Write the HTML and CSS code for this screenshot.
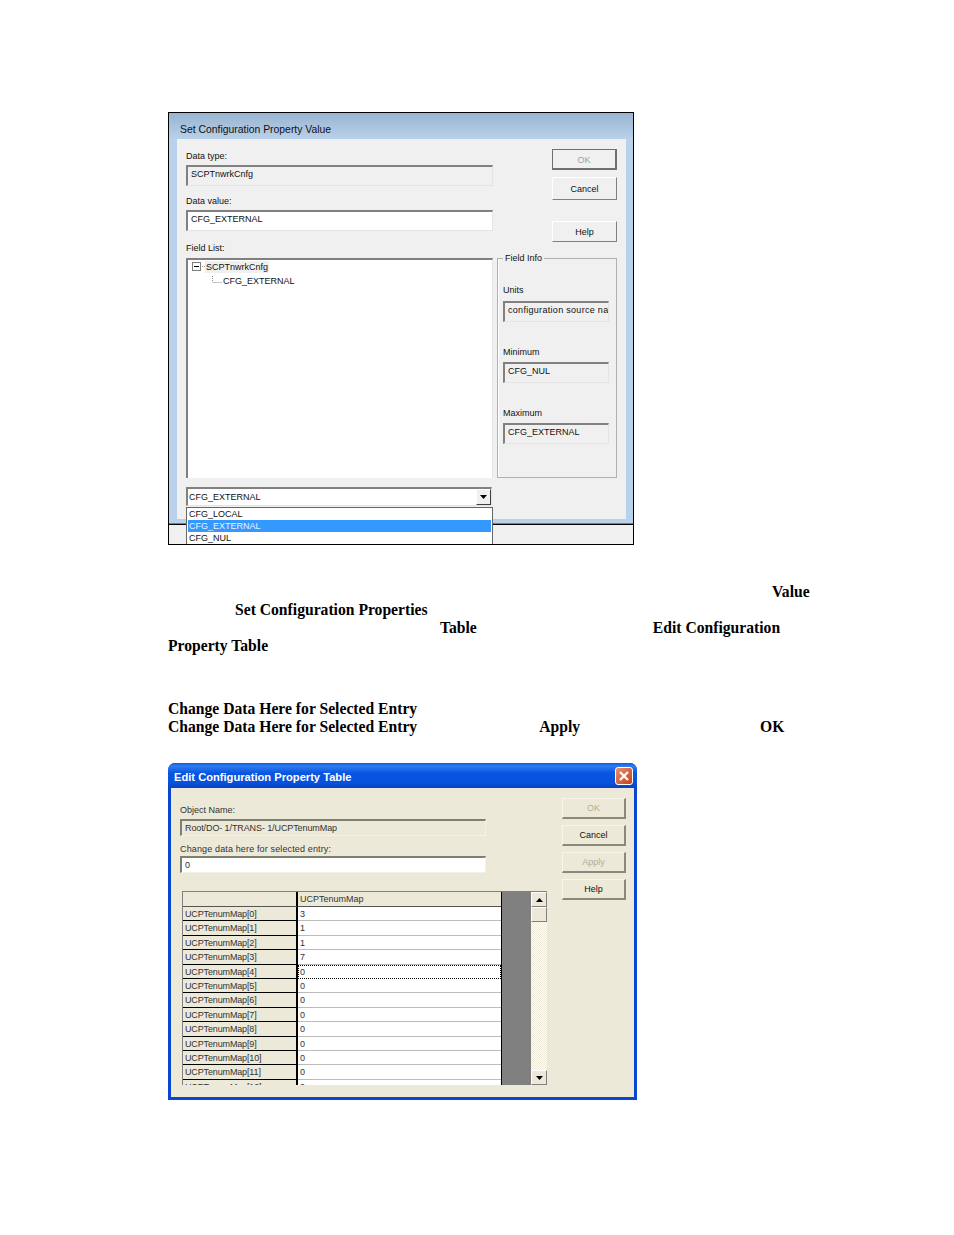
FILE: index.html
```html
<!DOCTYPE html>
<html lang="en">
<head>
<meta charset="utf-8">
<title>Configuration Properties</title>
<link rel="stylesheet" href="styles.css">
</head>
<body>
<section class="d1">
  <div class="d1-frame">
    <div class="d1-title">Set Configuration Property Value</div>
    <div class="d1-client">
      <div class="d1-left">
        <div class="lbl l-first">Data type:</div>
        <div class="field f-gray f-21">SCPTnwrkCnfg</div>
        <div class="lbl l-second">Data value:</div>
        <div class="field f-white f-21">CFG_EXTERNAL</div>
        <div class="lbl l-third">Field List:</div>
        <div class="tree">
          <div class="tree-root">
            <svg class="tree-icon" width="13" height="10" viewBox="0 0 13 10"><rect x="0.5" y="0.5" width="8" height="8" fill="#fff" stroke="#808080"/><path d="M2 4.500h5" stroke="#000"/><path d="M10 4.500h3" stroke="#999" stroke-dasharray="1 1"/></svg>
            <span class="tree-sel">SCPTnwrkCnfg</span>
          </div>
          <div class="tree-child">
            <svg class="tree-icon" width="10" height="10" viewBox="0 0 10 10"><path d="M0.500 0v6M0.500 6.500h9" stroke="#888" stroke-dasharray="1 1" fill="none"/></svg>
            <span>CFG_EXTERNAL</span>
          </div>
        </div>
        <div class="combo">
          <span>CFG_EXTERNAL</span>
          <span class="combo-btn"><svg width="7" height="4" viewBox="0 0 7 4"><path d="M0 0h7L3.500 4z" fill="#000"/></svg></span>
        </div>
      </div>
      <div class="d1-right">
        <div class="btn b-65 b-dis b-focus">OK</div>
        <div class="btn b-65 b-cancel">Cancel</div>
        <div class="btn b-65 b-help">Help</div>
        <div class="group">
          <span class="legend">Field Info</span>
          <div class="lbl g-first">Units</div>
          <div class="field f-gray f-g f-wide">configuration source name</div>
          <div class="lbl g-next">Minimum</div>
          <div class="field f-gray f-g">CFG_NUL</div>
          <div class="lbl g-next">Maximum</div>
          <div class="field f-gray f-g">CFG_EXTERNAL</div>
        </div>
      </div>
    </div>
  </div>
  <div class="d1-foot"></div>
  <ul class="drop">
    <li>CFG_LOCAL</li>
    <li class="drop-sel">CFG_EXTERNAL</li>
    <li>CFG_NUL</li>
  </ul>
</section>

<div class="doc">
  <p class="line"><b class="m-value">Value</b></p>
  <p class="line"><b class="m-set">Set Configuration Properties</b></p>
  <p class="line"><b class="m-table">Table</b><b class="m-edit">Edit Configuration</b></p>
  <p class="line"><b>Property Table</b></p>
  <p class="line l-gap"><b>Change Data Here for Selected Entry</b></p>
  <p class="line"><b>Change Data Here for Selected Entry</b><b class="m-apply">Apply</b><b class="m-ok">OK</b></p>
</div>

<section class="d2">
  <div class="d2-title">
    <span>Edit Configuration Property Table</span>
    <span class="close"><svg width="12" height="12" viewBox="0 0 12 12"><path d="M2 2l8 8M10 2l-8 8" stroke="#fff" stroke-width="2.200" fill="none"/></svg></span>
  </div>
  <div class="d2-client">
    <div class="d2-left">
      <div class="lbl2">Object Name:</div>
      <div class="field2 f2-gray">Root/DO- 1/TRANS- 1/UCPTenumMap</div>
      <div class="lbl2 l2-next">Change data here for selected entry:</div>
      <div class="field2 f2-white">0</div>
      <div class="grid-wrap">
        <div class="grid">
          <div class="row row-head"><div class="c1"></div><div class="c2">UCPTenumMap</div></div>
          <div class="row"><div class="c1">UCPTenumMap[0]</div><div class="c2">3</div></div>
          <div class="row"><div class="c1">UCPTenumMap[1]</div><div class="c2">1</div></div>
          <div class="row"><div class="c1">UCPTenumMap[2]</div><div class="c2">1</div></div>
          <div class="row"><div class="c1">UCPTenumMap[3]</div><div class="c2">7</div></div>
          <div class="row"><div class="c1">UCPTenumMap[4]</div><div class="c2 c-focus">0</div></div>
          <div class="row"><div class="c1">UCPTenumMap[5]</div><div class="c2">0</div></div>
          <div class="row"><div class="c1">UCPTenumMap[6]</div><div class="c2">0</div></div>
          <div class="row"><div class="c1">UCPTenumMap[7]</div><div class="c2">0</div></div>
          <div class="row"><div class="c1">UCPTenumMap[8]</div><div class="c2">0</div></div>
          <div class="row"><div class="c1">UCPTenumMap[9]</div><div class="c2">0</div></div>
          <div class="row"><div class="c1">UCPTenumMap[10]</div><div class="c2">0</div></div>
          <div class="row"><div class="c1">UCPTenumMap[11]</div><div class="c2">0</div></div>
          <div class="row"><div class="c1">UCPTenumMap[12]</div><div class="c2">0</div></div>
        </div>
        <div class="gray-fill"></div>
        <div class="scroll">
          <div class="sb-btn"><svg width="7" height="4" viewBox="0 0 7 4"><path d="M0 4h7L3.500 0z" fill="#000"/></svg></div>
          <div class="sb-thumb"></div>
          <div class="sb-track"></div>
          <div class="sb-btn"><svg width="7" height="4" viewBox="0 0 7 4"><path d="M0 0h7L3.500 4z" fill="#000"/></svg></div>
        </div>
      </div>
    </div>
    <div class="d2-right">
      <div class="btn2 b2-dis">OK</div>
      <div class="btn2">Cancel</div>
      <div class="btn2 b2-dis">Apply</div>
      <div class="btn2">Help</div>
    </div>
  </div>
</section>
</body>
</html>
```
FILE: styles.css
```css
* { box-sizing: border-box; }
html, body { margin: 0; padding: 0; background: #fff; }
body { height: 1235px; overflow: hidden; padding: 112px 0 0 168px; font-family: "Liberation Sans", Arial, sans-serif; font-size: 9px; color: #111; }

/* first dialog */
.d1 { position: relative; width: 466px; height: 433px; border: 1px solid #000; background: #f0f0f0; }
.d1-frame { height: 412px; background: #b9d1ea; border-bottom: 1px solid #000; box-shadow: inset 0 -1px 0 #1fa3b8; padding: 0 7px 6px 8px; }
.d1-title { height: 26px; margin: 0 -7px 0 -8px; padding: 10px 0 0 11px; font-size: 10.400px; line-height: 13px; background: linear-gradient(#99b4d1, #b9d1ea); }
.d1-client { display: flex; height: 380px; width: 449px; background: #f0f0f0; }
.d1-left { width: 316px; padding: 11px 0 0 9px; }
.lbl { height: 12px; line-height: 12px; white-space: nowrap; }
.l-first { margin-bottom: 3px; }
.l-second { margin: 9px 0 3px; }
.l-third { margin: 11px 0 4px; }
.field { border-style: solid; border-width: 2px 1px 1px 2px; border-color: #808080 #e4e4e4 #e4e4e4 #808080; white-space: nowrap; overflow: hidden; }
.f-gray { background: #f0f0f0; }
.f-white { background: #fff; }
.f-21 { width: 307px; height: 21px; padding-left: 3px; line-height: 15px; }
.tree { width: 307px; height: 220px; background: #fff; border-style: solid; border-width: 2px 1px 0 2px; border-color: #808080 #e4e4e4 #e4e4e4 #808080; padding: 1px 0 0 4px; }
.tree-root { display: flex; align-items: center; height: 12px; margin-bottom: 2px; }
.tree-icon { display: block; flex: none; }
.tree-sel { background: #f0f0f0; padding: 0 1px; line-height: 12px; }
.tree-child { display: flex; align-items: center; height: 12px; padding-left: 20px; }
.tree-child span { margin-left: 1px; }
.combo { display: flex; justify-content: space-between; align-items: center; width: 306px; height: 19px; margin-top: 9px; background: #fff; border-style: solid; border-width: 2px 1px 1px 2px; border-color: #808080 #e4e4e4 #e4e4e4 #808080; padding-left: 1px; }
.combo-btn { display: flex; align-items: center; justify-content: center; width: 15px; height: 16px; background: #f0f0f0; border-style: solid; border-width: 1px; border-color: #fff #404040 #404040 #fff; }
.d1-right { width: 133px; padding: 10px 0 0 4px; }
.btn { display: flex; align-items: center; justify-content: center; margin-left: 55px; background: #f0f0f0; border-style: solid; border-width: 1px; border-color: #fff #808080 #808080 #fff; }
.b-65 { width: 65px; height: 21px; }
.b-focus { border: 1px solid #707070; border-width: 1px 2px 2px 1px; padding-top: 1px; }
.b-dis { color: #a0a0a0; }
.b-cancel { margin-top: 7px; height: 23px; }
.b-help { margin-top: 21px; }
.group { position: relative; width: 120px; height: 220px; margin-top: 16px; border: 1px solid #b0b0b0; padding: 25px 0 0 5px; box-shadow: inset 1px 0 0 #fff; }
.legend { position: absolute; top: -7px; left: 5px; background: #f0f0f0; padding: 0 2px; line-height: 12px; }
.g-first { margin-bottom: 5px; }
.g-next { margin: 24px 0 4px; }
.f-g { width: 106px; height: 21px; padding: 0 2px 0 3px; line-height: 15px; }
.f-wide { letter-spacing: 0.300px; }
.drop { position: absolute; left: 17px; top: 394px; width: 307px; height: 37px; margin: 0; padding: 0 1px; list-style: none; background: #fff; border: 1px solid #666; border-bottom: 0; overflow: hidden; line-height: 12px; }
.drop li { height: 12px; padding-left: 1px; }
.drop .drop-sel { background: #3399ff; color: #e8f2ff; }

/* document text */
.doc { width: 660px; margin-top: 38px; font-family: "Liberation Serif", "Times New Roman", serif; font-size: 15.650px; color: #000; }
.line { margin: 0; height: 18px; line-height: 18px; white-space: nowrap; }
.l-gap { margin-top: 45px; }
.m-value { margin-left: 604px; }
.m-set { margin-left: 67px; }
.m-table { margin-left: 272px; }
.m-edit { margin-left: 176px; }
.m-apply { margin-left: 122px; }
.m-ok { margin-left: 180px; }

/* second dialog */
.d2 { width: 469px; height: 337px; margin-top: 27px; background: #0a46d2; border-radius: 7px 7px 0 0; padding: 0 3px 3px; overflow: hidden; }
.d2-title { display: flex; justify-content: space-between; align-items: center; height: 25px; margin: 0 -3px; padding: 2px 4px 0 6px; color: #fff; font-size: 11.150px; font-weight: bold; background: linear-gradient(#0a5ae6 0, #2f7df0 12%, #0a55e0 40%, #0652dd 80%, #0a40c0 100%); }
.close { display: flex; align-items: center; justify-content: center; width: 18px; height: 18px; margin-top: -2px; border: 1px solid #fff; border-radius: 3px; background: linear-gradient(135deg, #e8906c, #c8401c); }
.d2-client { display: flex; height: 309px; background: #ece9d8; }
.d2-left { width: 391px; padding: 16px 0 0 9px; color: #333; }
.lbl2 { height: 12px; line-height: 12px; }
.l2-next { margin-top: 7px; letter-spacing: 0.140px; }
.field2 { width: 306px; border-style: solid; border-width: 2px 1px 1px 2px; border-color: #808070 #f4f2e8 #f4f2e8 #808070; padding-left: 3px; line-height: 15px; height: 17px; margin-top: 3px; }
.f2-gray { letter-spacing: -0.100px; }
.f2-white { background: #fff; margin-top: 1px; }
.grid-wrap { display: flex; width: 365px; height: 194px; margin: 18px 0 0 2px; overflow: hidden; border-top: 1px solid #808080; }
.grid { width: 319px; flex: none; overflow: hidden; border-left: 1px solid #808080; }
.row { display: flex; height: 14.400px; line-height: 14px; }
.row-head { height: 15px; line-height: 15px; }
.c1 { width: 115px; padding-left: 2px; letter-spacing: -0.140px; background: #ece9d8; border-bottom: 1px solid #000; border-right: 2px solid #000; }
.c2 { flex: 1; padding-left: 2px; background: #fff; border-bottom: 1px solid #bbb; }
.row-head .c1 { border-bottom-color: #555; }
.row-head .c2 { background: #ece9d8; border-bottom-color: #555; }
.c-focus { outline: 1px dotted #000; outline-offset: -1px; border: 1px dotted #222; padding-left: 1px; line-height: 12px; }
.gray-fill { width: 30px; flex: none; background: #808080; border-left: 1px solid #000; }
.scroll { display: flex; flex-direction: column; width: 16px; flex: none; }
.sb-btn, .sb-thumb { flex: none; display: flex; align-items: center; justify-content: center; background: #ece9d8; border-style: solid; border-width: 1px; border-color: #fff #808080 #808080 #fff; }
.sb-btn { height: 15px; }
.sb-thumb { height: 15px; }
.sb-track { flex: 1; background: repeating-conic-gradient(#ece9d8 0 25%, #fff 0 50%) 0 0 / 2px 2px; }
.d2-right { width: 64px; padding-top: 10px; }
.btn2 { display: flex; align-items: center; justify-content: center; height: 21px; margin-bottom: 6px; border-style: solid; border-width: 1px 2px 2px 1px; border-color: #f8f6ec #8a887c #8a887c #f8f6ec; background: #ece9d8; }
.b2-dis { color: #b0ae9f; }
```
